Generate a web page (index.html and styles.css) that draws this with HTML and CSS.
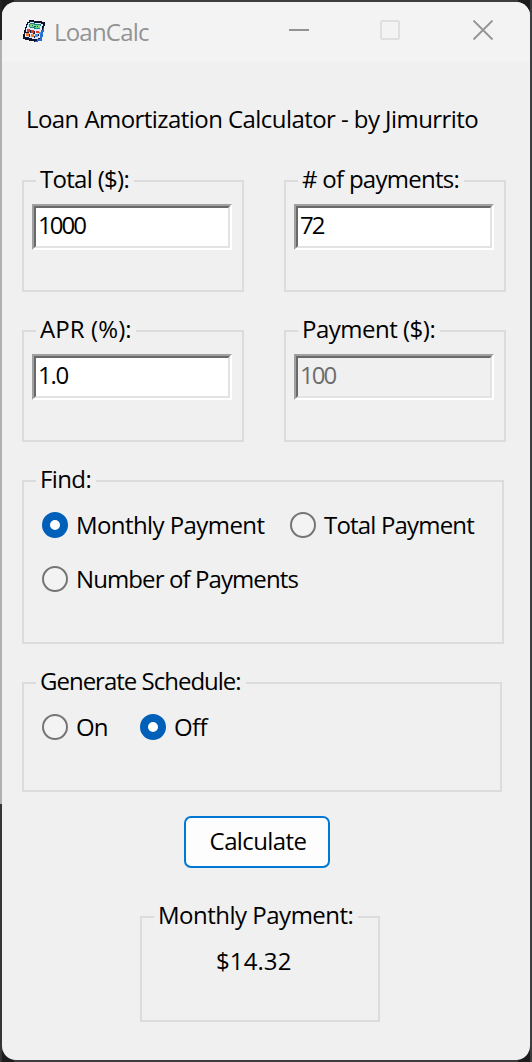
FILE: index.html
```
<!DOCTYPE html>
<html lang="en">
<head>
<meta charset="utf-8">
<title>LoanCalc</title>
<link rel="stylesheet" href="styles.css">
</head>
<body>
<main class="window">
  <header class="titlebar">
    <svg class="app-icon" width="24" height="24" viewBox="0 0 24 24">
      <path d="M7 1h5v1h8v1h3v4h-1v5h-1v6h-1v4h-4v1h-4v-1H7v-1H3v-1H1v-5h1v-4h1V8h1V5h1V3h2z" fill="#0c1230"/>
      <path d="M21 9h1v4h-1v5h-1v4h-4v1h-3v-1h2v-2h3v-5h1v-4h2z" fill="#2b6cd4"/>
      <path d="M8 3h4v1h7v1h2v2h-1v4h-1v4h-1v4h-2v1h-6v-1H7v-1H3v-4h1V9h1V6h1V4h2z" fill="#dfeaf7"/>
      <path d="M8 4h5v1h6v2h-1v3h-6V9H8V8H7V5h1z" fill="#227f80"/>
      <path d="M8 5h4v1h6v3h-5V8H8z" fill="#74d886"/>
      <path d="M10 6h1v1h-1zM12 7h2v1h-2zM15 7h1v1h-1z" fill="#155a4e"/>
      <path d="M5 10h3v3H5zM9 11h3v3H9zM14 12h3v2h-3z" fill="#df3824"/>
      <path d="M4 14h3v3H4zM9 15h3v3H9z" fill="#f27a28"/>
      <path d="M13 15h3v3h-3zM17 13h2v2h-2z" fill="#3f95e6"/>
      <path d="M8 11h1v3H8zM12 12h1v3h-1zM11 14h2v1h-2zM7 15h1v3H7zM12 17h1v2h-1zM16 15h1v2h-1zM4 13h3v1H4z" fill="#17213f"/>
    </svg>
    <span class="app-name">LoanCalc</span>
    <svg class="controls" width="206" height="22" viewBox="0 0 206 22" fill="none">
      <path d="M0 10h20" stroke="#939393" stroke-width="2"/>
      <rect x="92" y="1" width="18" height="18" rx="1.5" stroke="#dfdfdf" stroke-width="2"/>
      <path d="M184.5 .5l19 19m0-19l-19 19" stroke="#939393" stroke-width="1.8"/>
    </svg>
  </header>
  <div class="client">
    <h1 class="heading">Loan Amortization Calculator - by Jimurrito</h1>
    <div class="fields">
      <section class="group">
        <div class="legend total">Total ($):</div>
        <div class="entry"><div class="entry-inner">1000</div></div>
      </section>
      <section class="group">
        <div class="legend count">#&nbsp;of payments:</div>
        <div class="entry"><div class="entry-inner">72</div></div>
      </section>
      <section class="group">
        <div class="legend apr">APR (%):</div>
        <div class="entry"><div class="entry-inner decimal">1.0</div></div>
      </section>
      <section class="group">
        <div class="legend amount">Payment ($):</div>
        <div class="entry disabled"><div class="entry-inner">100</div></div>
      </section>
    </div>
    <section class="group find">
      <div class="legend find-title">Find:</div>
      <div class="options">
        <div class="option wide"><i class="radio checked"></i><span class="monthly">Monthly Payment</span></div>
        <div class="option"><i class="radio"></i><span class="total-pay">Total Payment</span></div>
        <div class="option"><i class="radio"></i><span class="number">Number of Payments</span></div>
      </div>
    </section>
    <section class="group schedule">
      <div class="legend schedule-title">Generate Schedule:</div>
      <div class="options">
        <div class="option narrow"><i class="radio"></i><span class="on">On</span></div>
        <div class="option"><i class="radio checked"></i><span class="off">Off</span></div>
      </div>
    </section>
    <button class="calculate">Calculate</button>
    <section class="group result">
      <div class="legend result-title">Monthly Payment:</div>
      <div class="answer">$14.32</div>
    </section>
  </div>
</main>
</body>
</html>
```
FILE: styles.css
```
* { box-sizing: border-box; }
body {
  margin: 0;
  width: 532px;
  height: 1062px;
  padding: 2px;
  overflow: hidden;
  background:
    linear-gradient(#222 0 40px, #b0b0b0 40px 804px, #333537 804px) 0 0 / 2px 1062px no-repeat,
    linear-gradient(90deg, #1c1c1c 0 14px, #3d3d3f 14px 518px, #1c1c1c 518px 530px, #3d3d3f 530px);
  font: 24px/32px "Open Sans", "Noto Sans", sans-serif;
  color: #000;
}
.window {
  width: 528px;
  height: 1058px;
  border-radius: 14px;
  overflow: hidden;
  background: #f0f0f0;
}
.titlebar {
  display: flex;
  height: 60px;
  padding-left: 20px;
  background: #f3f3f3;
  color: #939393;
}
.app-icon { margin-top: 17px; shape-rendering: crispEdges; }
.app-name { margin: 14px 0 0 8px; width: 233px; letter-spacing: -.8px; }
.controls { margin: 18px 0 0 2px; }
.client { padding: 41px 20px 0; }
.heading {
  margin: 0 0 45px 4px;
  font-size: 24px;
  font-weight: 400;
  letter-spacing: -.56px;
  white-space: nowrap;
}
.fields {
  display: grid;
  grid-template-columns: 222px 222px;
  gap: 38px 40px;
}
.group {
  height: 112px;
  padding: 0 8px;
  border: 2px solid #dcdcdc;
}
.legend {
  height: 32px;
  margin: -19px 0 9px 4px;
  padding-left: 4px;
  background: #f0f0f0;
  white-space: nowrap;
}
.total { width: 98px; letter-spacing: -.7px; }
.count { width: 166px; letter-spacing: -.72px; }
.apr { width: 100px; letter-spacing: .1px; }
.amount { width: 142px; letter-spacing: -.5px; }
.find-title { width: 60px; letter-spacing: -.6px; }
.schedule-title { width: 210px; letter-spacing: -1px; }
.result-title { width: 204px; letter-spacing: -.5px; }
.entry {
  width: 200px;
  height: 46px;
  border: 2px solid;
  border-color: #a0a0a0 #fff #fff #a0a0a0;
  background: #fff;
}
.entry-inner {
  height: 42px;
  padding: 1px 2px;
  border: 2px solid;
  border-color: #696969 #e3e3e3 #e3e3e3 #696969;
  letter-spacing: -2px;
}
.decimal { letter-spacing: -1.3px; }
.disabled { background: #f0f0f0; color: #6d6d6d; }
.find { width: 482px; height: 164px; margin-top: 38px; }
.schedule { width: 480px; height: 110px; margin-top: 38px; }
.options {
  display: flex;
  flex-wrap: wrap;
  row-gap: 22px;
  margin: 14px 0 0 10px;
}
.option { display: flex; align-items: center; height: 32px; white-space: nowrap; }
.wide { width: 248px; }
.narrow { width: 98px; }
.radio {
  flex: none;
  width: 26px;
  height: 26px;
  margin-right: 8px;
  border: 2px solid #757575;
  border-radius: 50%;
  background: #f3f3f3;
}
.checked { border: 8px solid #005fb8; background: #fff; }
.monthly { letter-spacing: -.58px; }
.total-pay { letter-spacing: -.82px; }
.number { letter-spacing: -.9px; }
.on { letter-spacing: -.8px; }
.off { letter-spacing: -.6px; }
.calculate {
  display: block;
  width: 146px;
  height: 52px;
  margin: 24px 0 48px 162px;
  padding: 0 0 2px 2px;
  border: 2px solid #0078d4;
  border-radius: 7px;
  background: #fdfdfd;
  color: #000;
  font: inherit;
  letter-spacing: -.6px;
}
.result { width: 240px; height: 106px; margin-left: 118px; }
.answer { margin: 14px 0 0 66px; letter-spacing: .1px; }
```
